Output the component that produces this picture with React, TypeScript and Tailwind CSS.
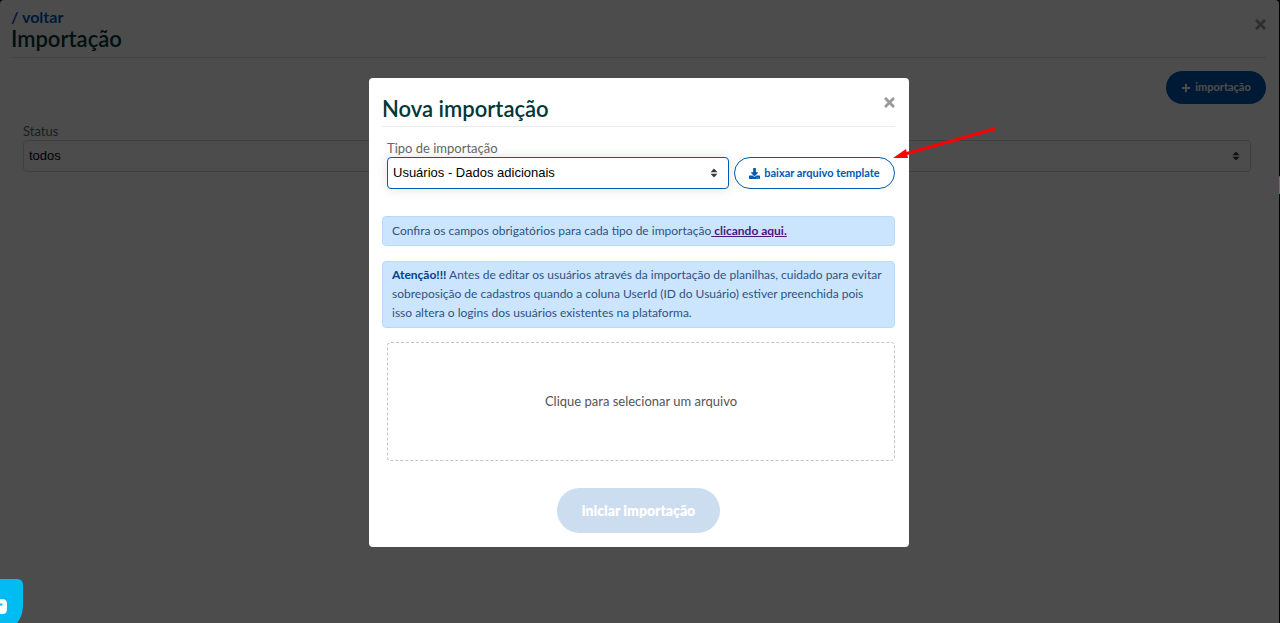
import { useState } from 'react';
import { FaDownload, FaPlus, FaTimes } from 'react-icons/fa';

function SelectArrows() {
  return (
    <svg
      className="pointer-events-none absolute top-1/2 right-[11px] h-[9px] w-[8px] -translate-y-1/2"
      viewBox="0 0 8 9"
      fill="#343a40"
    >
      <path d="M4 0L7.500 3.800H0.500zM4 9L0.500 5.200H7.500z" />
    </svg>
  );
}

function ChatWidget() {
  return (
    <button aria-label="Chat" className="fixed bottom-0 left-0 z-20 block">
      <svg width="24" height="44" viewBox="0 0 24 44">
        <path d="M0 0H17Q23 0 23 6V24C23 34 21 39 17 44H0Z" fill="#00bcf2" />
        <path d="M0 20H2Q7 20 7 25V30Q7 35 3 35H0V26.500H2Q3.500 25.500 2 24.500H0Z" fill="#fff" />
      </svg>
    </button>
  );
}

function Arrow() {
  return (
    <svg
      className="pointer-events-none absolute top-[48px] left-[524px] h-[34px] w-[104px]"
      viewBox="0 0 104 34"
    >
      <path d="M101 3L12 28" stroke="#f00" strokeWidth="3" strokeLinecap="round" />
      <path d="M0 32L13 23L15 32Z" fill="#f00" />
    </svg>
  );
}

export default function App() {
  const [status, setStatus] = useState('todos');
  const [tipo, setTipo] = useState('dados');

  return (
    <div className="min-h-screen bg-black pr-px font-['Lato','Open_Sans',sans-serif]">
      {/* Page */}
      <main className="min-h-screen rounded-t bg-white pt-[7px] pr-[13px] pl-[11px]">
        <header className="flex items-start justify-between border-b border-[#dee2e6] pb-[7px]">
          <div>
            <a href="#" className="block text-base leading-5 font-bold text-[#0059b3]">
              / voltar
            </a>
            <h1 className="text-[22px] leading-[23px] font-semibold text-[#003838]">Importação</h1>
          </div>
          <button aria-label="Fechar página" className="-mr-0.5 mt-[10px] text-[#999]">
            <FaTimes size={15} />
          </button>
        </header>

        <div className="mt-[13px] flex justify-end">
          <button className="flex h-[33px] w-[100px] items-center justify-center gap-1 rounded-full bg-[#0059b3] text-[11px] font-bold text-white">
            <FaPlus size={10} />
            importação
          </button>
        </div>

        <div className="mt-[18px] pr-[15px] pl-3">
          <label htmlFor="status" className="block text-[13px] leading-[18px] text-[#666]">
            Status
          </label>
          <div className="relative">
            <select
              id="status"
              value={status}
              onChange={(e) => setStatus(e.target.value)}
              className="block h-8 w-full appearance-none rounded border border-[#ced4da] bg-white px-[5px] font-['Liberation_Sans',sans-serif] text-[13px] text-black"
            >
              <option value="todos">todos</option>
            </select>
            <SelectArrows />
          </div>
        </div>
      </main>

      {/* Small tab on the right edge */}
      <div className="absolute top-[176px] right-0 z-20 h-[18px] w-px rounded-full bg-[#0092b8]" />

      {/* Modal */}
      <div className="fixed inset-0 z-10 flex items-start justify-center bg-black/70 pt-[78px]">
        <section
          role="dialog"
          aria-labelledby="modal-title"
          className="relative mr-0.5 w-full max-w-[540px] rounded bg-white pr-[14px] pb-[14px] pl-[13px]"
        >
          <header className="flex items-start justify-between border-b border-[#e9ecef] pt-[17px] pb-[4px]">
            <h2 id="modal-title" className="text-[22px] leading-[27px] font-semibold text-[#003838]">
              Nova importação
            </h2>
            <button aria-label="Fechar" className="-mr-0.5 text-[#999]">
              <FaTimes size={15} />
            </button>
          </header>

          <div className="mt-3 flex items-end gap-[5px] pl-[5px]">
            <div className="flex-1">
              <label htmlFor="tipo" className="block text-[13px] leading-[18px] text-[#666]">
                Tipo de importação
              </label>
              <div className="relative">
                <select
                  id="tipo"
                  value={tipo}
                  onChange={(e) => setTipo(e.target.value)}
                  className="block h-8 w-full appearance-none rounded border border-[#0059b3] bg-white px-[5px] font-['Liberation_Sans',sans-serif] text-[13px] text-black shadow-[0_0_12px_rgba(0,0,0,0.12)]"
                >
                  <option value="dados">Usuários - Dados adicionais</option>
                </select>
                <SelectArrows />
              </div>
            </div>
            <button className="flex h-8 w-[161px] items-center justify-center gap-1 rounded-full border border-[#0059b3] text-[11px] font-bold text-[#0059b3]">
              <FaDownload size={11} />
              baixar arquivo template
            </button>
          </div>

          <p className="mt-[27px] rounded border border-[#b8daff] bg-[#cce5ff] px-[9px] py-[5px] text-xs leading-[18px] text-[#2f5280]">
            Confira os campos obrigatórios para cada tipo de importação
            <a href="#" className="font-bold text-[#4b1682] underline">
              {' '}
              clicando aqui.
            </a>
          </p>

          <p className="mt-[15px] rounded border border-[#b8daff] bg-[#cce5ff] px-[9px] pt-[3px] pb-[5px] text-xs leading-[19px] text-[#2f5280]">
            <strong className="text-[#004085]">Atenção!!!</strong> Antes de editar os usuários através da
            importação de planilhas, cuidado para evitar sobreposição de cadastros quando a coluna UserId (ID
            do Usuário) estiver preenchida pois isso altera o logins dos usuários existentes na plataforma.
          </p>

          <label className="mt-[14px] ml-[5px] flex h-[119px] cursor-pointer items-center justify-center rounded border border-dashed border-[#c4c4c4] text-[13px] text-[#555]">
            Clique para selecionar um arquivo
            <input type="file" className="sr-only" />
          </label>

          <div className="mt-[27px] flex justify-center">
            <button
              disabled
              className="h-[45px] w-[163px] rounded-full bg-[#ccddf0] text-sm font-extrabold text-white"
            >
              iniciar importação
            </button>
          </div>

          <Arrow />
        </section>
      </div>

      <ChatWidget />
    </div>
  );
}
